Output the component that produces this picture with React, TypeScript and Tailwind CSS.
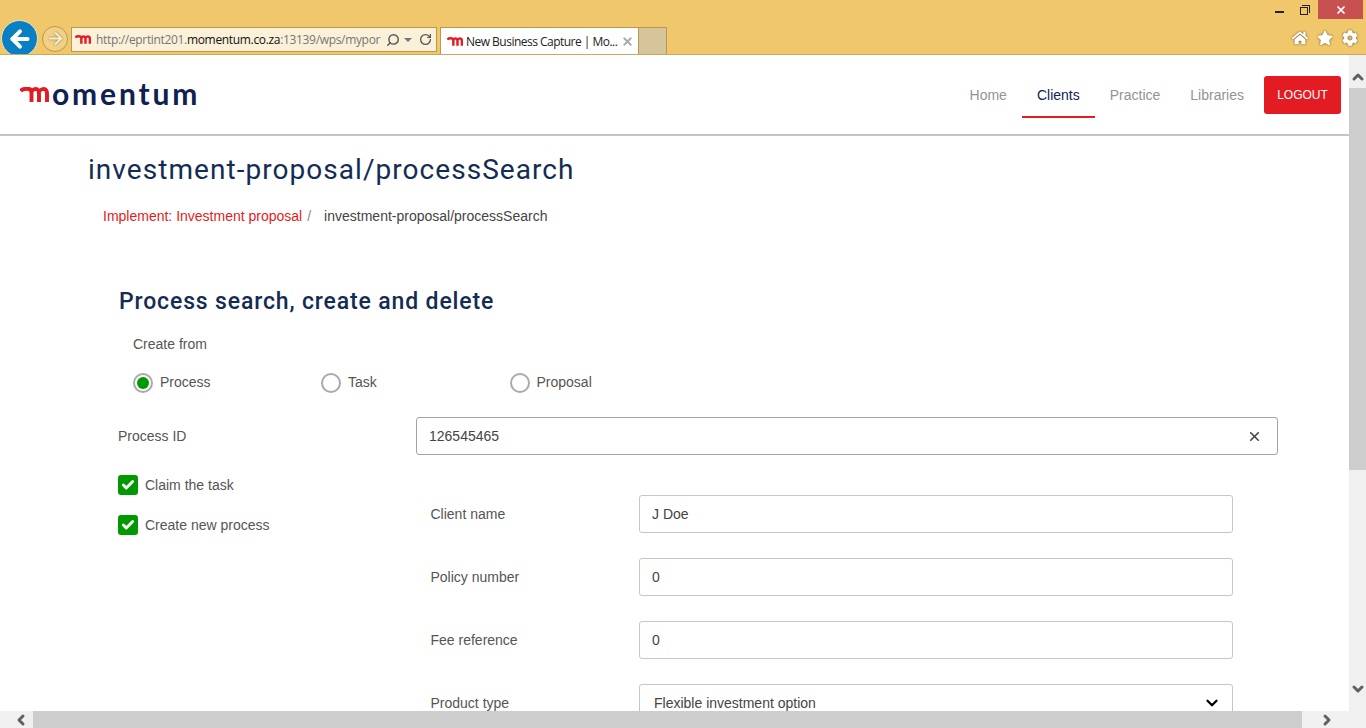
import React from "react";
import { X, Check, ChevronDown, ChevronUp, ChevronLeft, ChevronRight, Search, RotateCw, ArrowLeft, ArrowRight } from "lucide-react";
import { FaHome, FaStar, FaCog } from "react-icons/fa";

const MMark = ({ className = "", sw = 3.9 }: { className?: string; sw?: number }) => (
  <svg viewBox="0 0 29 15" className={className} fill="none" stroke="#e31b23" strokeWidth={sw}>
    <path d="M0.5 4 C3 1 6 1.5 9 2 C11 2.3 11.5 4 11.5 6 V15" />
    <path d="M11.5 5 C12 2 16 1.5 17.5 2.5 C19 3.5 19 5 19 7 V15" />
    <path d="M19 5 C20 2 24 1.5 25.5 2.5 C27 3.5 27 5 27 7 V15" />
  </svg>
);

const NavItem = ({ label, active }: { label: string; active?: boolean }) => (
  <div className={`h-[46px] px-[15px] pt-[2px] flex items-center text-[14px] border-b-2 mt-[1px] ${active ? "border-[#e31b23] text-[#0f2150]" : "border-transparent text-[#939393]"}`}>
    {label}
  </div>
);

const Radio = ({ label, checked, w }: { label: string; checked?: boolean; w: string }) => (
  <div className={`flex items-center gap-[7px] ${w}`}>
    <span className="w-5 h-5 rounded-full border-2 border-[#a9a9a9] flex items-center justify-center bg-white">
      {checked && <span className="w-3 h-3 rounded-full bg-[#009a00]" />}
    </span>
    <span className="text-[14px] text-[#555]">{label}</span>
  </div>
);

const Check2 = ({ label }: { label: string }) => (
  <div className="flex items-center gap-[7px] h-5">
    <span className="w-5 h-5 rounded-[3px] bg-[#009a00] flex items-center justify-center">
      <Check size={14} strokeWidth={5} className="text-white" />
    </span>
    <span className="text-[14px] text-[#555]">{label}</span>
  </div>
);

const Field = ({ label, value, select }: { label: string; value: string; select?: boolean }) => (
  <div className="flex items-center h-[38px] mb-[25px]">
    <div className="w-[208.5px] text-[14px] text-[#555] shrink-0">{label}</div>
    <div className={`w-[594px] h-[38px] border border-[#c6c6c6] rounded-[3px] flex items-center justify-between text-[14px] text-[#444] ${select ? "pl-[14px] pr-[11px]" : "pl-3"}`}>
      <span>{value}</span>
      {select && <ChevronDown size={18} strokeWidth={3} className="text-black" />}
    </div>
  </div>
);

export default function App() {
  return (
    <div className="h-[728px] w-[1366px] overflow-hidden flex flex-col bg-white font-['Liberation_Sans',Arial,sans-serif]">
      {/* Browser chrome */}
      <div className="h-[55px] bg-[#f0c76a] border-b border-[#c9a95e] relative shrink-0 flex items-end overflow-hidden">
        <div className="flex items-center pl-[1px] h-[37px] -mb-[3px]">
          <div className="w-[37px] h-[37px] rounded-full bg-[#0a80c4] border border-[#f5e2b0] flex items-center justify-center shrink-0">
            <ArrowLeft size={26} strokeWidth={3.6} className="text-white" />
          </div>
          <div className="ml-[4px] w-[26px] h-[26px] rounded-full border border-[#b8994f] bg-[#f2d185] flex items-center justify-center shrink-0">
            <ArrowRight size={19} strokeWidth={2.4} className="text-[#f8efd8] [filter:drop-shadow(0_0_1px_#8a7133)]" />
          </div>
          <div className="ml-[3px] mt-[2px] w-[366px] h-[25px] border border-[#b8994f] bg-[#fbf0d8] flex items-center pl-[3px] pr-[3px] text-[12px] text-[#777] whitespace-nowrap overflow-hidden font-['Open_Sans',sans-serif] shrink-0">
            <MMark className="w-[16px] h-[9px] shrink-0 mr-[5px]" sw={4.4} />
            <span className="tracking-[-0.33px] w-[287px] shrink-0">
              http://eprtint201.<span className="text-[#111]">momentum.co.za</span>:13139/wps/mypor
            </span>
            <Search size={14} strokeWidth={2.4} className="text-[#555] ml-[3px] shrink-0 -scale-x-100" />
            <span className="ml-[4px] w-0 h-0 border-x-[4px] border-x-transparent border-t-[4px] border-t-[#777] shrink-0" />
            <RotateCw size={13} strokeWidth={2.4} className="text-[#555] ml-[7px] shrink-0" />
          </div>
          <div className="ml-[3px] mt-[5px] w-[199px] h-[28px] bg-white border border-[#b8994f] border-b-0 flex items-center pl-[6px] pr-[4px] text-[12px] text-[#222] whitespace-nowrap font-['Open_Sans',sans-serif] shrink-0">
            <MMark className="w-[16px] h-[9px] shrink-0 mr-[3px]" sw={4.4} />
            <span className="flex-1 tracking-[-0.52px]">New Business Capture | Mo...</span>
            <X size={13} strokeWidth={3.4} className="text-[#a9a9a9] shrink-0" />
          </div>
          <div className="mt-[5px] w-[28px] h-[28px] bg-[#d6c59a] border border-[#b8994f] border-l-0 border-b-0 shrink-0" />
        </div>
        <div className="absolute top-0 right-[3px] flex items-start">
          <div className="w-[9px] h-[2px] bg-[#222] mt-[11px] mr-[16px]" />
          <div className="relative w-[8px] h-[8px] border border-[#222] mt-[7px] mr-[10px] after:content-[''] after:absolute after:-top-[3px] after:-right-[3px] after:w-[8px] after:h-[8px] after:border-t after:border-r after:border-[#222]" />
          <div className="w-[45px] h-[19px] bg-[#c75050] flex items-center justify-center">
            <X size={12} strokeWidth={3.4} className="text-white" />
          </div>
        </div>
        <div className="absolute right-[8px] top-[30px] flex items-center gap-[9px]">
          <FaHome size={16} className="text-white [filter:drop-shadow(0_0_1px_#5f5026)]" />
          <FaStar size={16} className="text-white [filter:drop-shadow(0_0_1px_#5f5026)]" />
          <FaCog size={16} className="text-white [filter:drop-shadow(0_0_1px_#5f5026)]" />
        </div>
      </div>

      <div className="flex-1 flex min-h-0">
        <div className="w-[1349px] flex flex-col min-h-0 overflow-hidden">
          {/* App header */}
          <header className="h-[81px] shrink-0 border-b-2 border-[#c4c4c4] flex items-center justify-between pl-5 pr-2 relative">
            <div className="flex items-end text-[#0f2150] font-['Lato',sans-serif] font-bold text-[30px] leading-[30px] tracking-[2.85px] -mt-[4px]">
              <MMark className="w-[29px] h-[15px] mr-[3px] mb-[6px]" />
              <span>omentum</span>
            </div>
            <nav className="flex items-center">
              <NavItem label="Home" />
              <NavItem label="Clients" active />
              <NavItem label="Practice" />
              <NavItem label="Libraries" />
              <div className="ml-[5px] w-[77px] h-[38px] bg-[#e31b23] rounded-[3px] flex items-center justify-center text-white text-[12px]">LOGOUT</div>
            </nav>
          </header>

          {/* Page content */}
          <main className="flex-1 min-h-0 pl-[88px] overflow-hidden">
            <h1 className="mt-[15px] h-[38px] text-[28px] leading-[38px] tracking-[1.05px] text-[#142c54] font-['Roboto',sans-serif] font-normal">investment-proposal/processSearch</h1>
            <div className="mt-[17px] pl-[15px] flex text-[14px] h-5 items-center">
              <span className="text-[#e31b23]">Implement: Investment proposal</span>
              <span className="text-[#888] ml-[5px]">/</span>
              <span className="text-[#444] ml-[13px]">investment-proposal/processSearch</span>
            </div>

            <div className="pl-[30px]">
              <h2 className="mt-[60px] h-[32px] pl-[1px] text-[23px] leading-[32px] tracking-[0.85px] font-medium text-[#142c54] font-['Roboto',sans-serif]">Process search, create and delete</h2>
              <div className="pl-[15px] mt-[16px] text-[14px] leading-5 text-[#555]">Create from</div>
              <div className="pl-[15px] mt-[18px] flex">
                <Radio label="Process" checked w="w-[188px]" />
                <Radio label="Task" w="w-[188.5px]" />
                <Radio label="Proposal" w="w-[150px]" />
              </div>
              <div className="mt-[24px] flex items-center h-[38px]">
                <div className="w-[298px] text-[14px] text-[#555]">Process ID</div>
                <div className="w-[862px] h-[38px] border border-[#a3a3a3] rounded-[3px] flex items-center justify-between pl-3 pr-[15px] text-[14px] text-[#444]">
                  <span>126545465</span>
                  <X size={15} strokeWidth={2.6} className="text-[#444]" />
                </div>
              </div>
              <div className="flex mt-[20px]">
                <div className="w-[312.5px] shrink-0 flex flex-col gap-5">
                  <Check2 label="Claim the task" />
                  <Check2 label="Create new process" />
                </div>
                <div className="pt-[20px]">
                  <Field label="Client name" value="J Doe" />
                  <Field label="Policy number" value="0" />
                  <Field label="Fee reference" value="0" />
                  <Field label="Product type" value="Flexible investment option" select />
                </div>
              </div>
            </div>
          </main>

          {/* Horizontal scrollbar */}
          <div className="h-[17px] shrink-0 bg-[#f0f0f0] flex">
            <div className="w-[33px] flex items-center justify-end pr-[4px]"><ChevronLeft size={16} strokeWidth={4.5} className="text-[#606060]" /></div>
            <div className="w-[1269px] bg-[#cdcdcd]" />
            <div className="flex-1 flex items-center pl-[17px]"><ChevronRight size={16} strokeWidth={4.5} className="text-[#606060]" /></div>
          </div>
        </div>

        {/* Vertical scrollbar */}
        <div className="w-[17px] shrink-0 bg-[#f0f0f0] flex flex-col">
          <div className="h-[33px] flex items-center justify-center pt-[11px]"><ChevronUp size={16} strokeWidth={4.5} className="text-[#606060]" /></div>
          <div className="h-[382px] bg-[#cdcdcd]" />
          <div className="flex-1 flex items-end justify-center pb-[31px]"><ChevronDown size={16} strokeWidth={4.5} className="text-[#606060]" /></div>
        </div>
      </div>
    </div>
  );
}
